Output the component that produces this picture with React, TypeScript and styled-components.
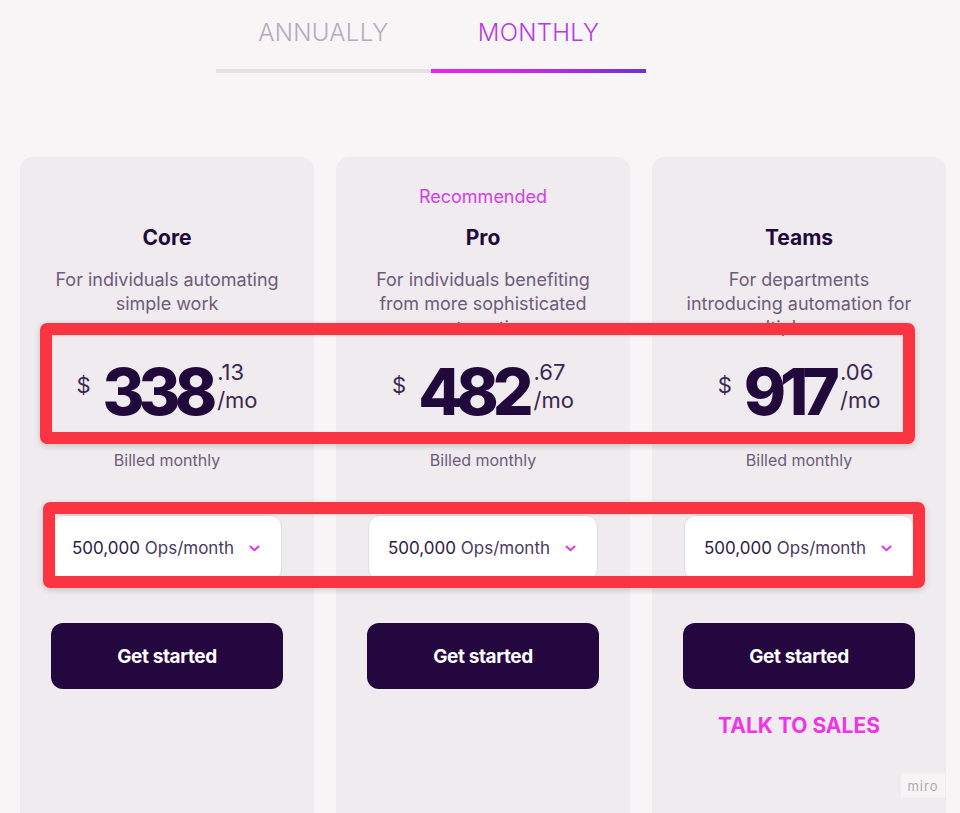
import React from "react";
import styled, { createGlobalStyle } from "styled-components";

const Global = createGlobalStyle`
  html, body { margin: 0; padding: 0; background: #f7f5f5; }
  body { font-family: Inter, "Noto Sans", "Liberation Sans", sans-serif; }
  * { box-sizing: border-box; }
`;

const Page = styled.div`
  position: relative;
  width: 960px;
  height: 813px;
  overflow: hidden;
  background: #f7f5f5;
`;

const TabBar = styled.div`
  display: flex;
  padding: 18px 0 0 216px;
`;

const Tab = styled.div<{ $active?: boolean }>`
  width: 215px;
  display: flex;
  flex-direction: column;
  align-items: center;
  gap: 21px;
  font-size: 24px;
  line-height: 30px;
  font-weight: 300;
  letter-spacing: 0.3px;
  color: ${(p) => (p.$active ? "#b63ae4" : "#b7a9c0")};
`;

const TabLine = styled.div<{ $active?: boolean }>`
  align-self: stretch;
  height: 4px;
  background: ${(p) =>
    p.$active ? "linear-gradient(90deg, #f31ff0 0%, #c02ae6 50%, #6d31d4 100%)" : "#e4e0e4"};
`;

const Cards = styled.div`
  display: grid;
  grid-template-columns: repeat(3, 294px);
  gap: 22px;
  margin: 84px 0 0 20px;
`;

const Card = styled.div`
  height: 720px;
  background: #f0ebee;
  border-radius: 13px;
  padding-top: 28px;
  display: flex;
  flex-direction: column;
  align-items: center;
  text-align: center;
`;

const Recommended = styled.div`
  height: 24px;
  font-size: 18px;
  line-height: 24px;
  color: #d43ee8;
`;

const Title = styled.div`
  margin-top: 15px;
  font-size: 21px;
  line-height: 28px;
  font-weight: 700;
  color: #22093c;
`;

const Description = styled.div`
  margin-top: 16px;
  width: 234px;
  height: 68px;
  overflow: hidden;
  font-size: 18px;
  line-height: 24px;
  color: #6d5b7d;
`;

const PriceRow = styled.div`
  margin-top: 22px;
  display: flex;
  align-items: flex-start;
  height: 66px;
  color: #22093c;
`;

const Currency = styled.span`
  margin-top: 16px;
  margin-right: 12px;
  font-size: 22px;
  line-height: 22px;
  color: #3a2852;
`;

const Amount = styled.span`
  margin-top: 2px;
  font-size: 64px;
  line-height: 64px;
  font-weight: 800;
  letter-spacing: -6px;
  margin-right: 6px;
`;

const Suffix = styled.span`
  display: flex;
  flex-direction: column;
  align-items: flex-start;
  font-size: 22px;
  line-height: 28px;
  color: #3a2852;
`;

const Billed = styled.div`
  margin-top: 24px;
  font-size: 16px;
  line-height: 24px;
  color: #6d5b7d;
`;

const Select = styled.div`
  margin-top: 43px;
  width: 230px;
  height: 66px;
  background: #ffffff;
  border: 1px solid #e3dce3;
  border-radius: 12px;
  display: flex;
  align-items: center;
  justify-content: space-between;
  padding: 0 21px 0 19px;
  font-size: 17px;
  color: #4a3a5e;
`;

const Strong = styled.span`
  color: #2e1a46;
`;

const Chevron = styled.svg`
  width: 11px;
  height: 7px;
`;

const Button = styled.button`
  margin-top: 42px;
  width: 232px;
  height: 66px;
  border: none;
  border-radius: 12px;
  background: #24073f;
  color: #ffffff;
  font-family: Inter, "Noto Sans", sans-serif;
  font-size: 19px;
  font-weight: 700;
  letter-spacing: -0.4px;
`;

const SalesLink = styled.div`
  margin-top: 25px;
  font-size: 21px;
  line-height: 24px;
  font-weight: 700;
  color: #ee36e6;
`;

const Annotation = styled.div<{ $top: number; $left: number; $width: number; $height: number }>`
  position: absolute;
  top: ${(p) => p.$top}px;
  left: ${(p) => p.$left}px;
  width: ${(p) => p.$width}px;
  height: ${(p) => p.$height}px;
  border: 12px solid #fb3442;
  border-radius: 7px;
  box-shadow: 0 2px 6px rgba(0, 0, 0, 0.18), inset 0 1px 3px rgba(0, 0, 0, 0.12);
  pointer-events: none;
`;

const Watermark = styled.div`
  position: absolute;
  right: 15px;
  top: 773px;
  width: 44px;
  height: 25px;
  background: #f6f4f5;
  display: flex;
  align-items: center;
  justify-content: center;
  font-size: 13px;
  letter-spacing: 1px;
  color: #aea8ad;
`;

type Plan = {
  name: string;
  desc: string;
  amount: string;
  cents: string;
  recommended?: boolean;
  sales?: boolean;
};

const plans: Plan[] = [
  { name: "Core", desc: "For individuals automating simple work", amount: "338", cents: ".13" },
  {
    name: "Pro",
    desc: "For individuals benefiting from more sophisticated automation",
    amount: "482",
    cents: ".67",
    recommended: true,
  },
  {
    name: "Teams",
    desc: "For departments introducing automation for multiple users",
    amount: "917",
    cents: ".06",
    sales: true,
  },
];

export default function App() {
  return (
    <Page>
      <Global />
      <TabBar>
        <Tab>
          ANNUALLY
          <TabLine />
        </Tab>
        <Tab $active>
          MONTHLY
          <TabLine $active />
        </Tab>
      </TabBar>
      <Cards>
        {plans.map((p) => (
          <Card key={p.name}>
            <Recommended>{p.recommended ? "Recommended" : ""}</Recommended>
            <Title>{p.name}</Title>
            <Description>{p.desc}</Description>
            <PriceRow>
              <Currency>$</Currency>
              <Amount>{p.amount}</Amount>
              <Suffix>
                <span>{p.cents}</span>
                <span>/mo</span>
              </Suffix>
            </PriceRow>
            <Billed>Billed monthly</Billed>
            <Select>
              <span>
                <Strong>500,000</Strong> Ops/month
              </span>
              <Chevron viewBox="0 0 11 7">
                <path d="M1.5 1.5 L5.5 5.2 L9.5 1.5" fill="none" stroke="#e236e8" strokeWidth="2" strokeLinecap="round" strokeLinejoin="round" />
              </Chevron>
            </Select>
            <Button>Get started</Button>
            {p.sales && <SalesLink>TALK TO SALES</SalesLink>}
          </Card>
        ))}
      </Cards>
      <Annotation $top={323} $left={40} $width={875} $height={121} />
      <Annotation $top={502} $left={43} $width={882} $height={86} />
      <Watermark>miro</Watermark>
    </Page>
  );
}
